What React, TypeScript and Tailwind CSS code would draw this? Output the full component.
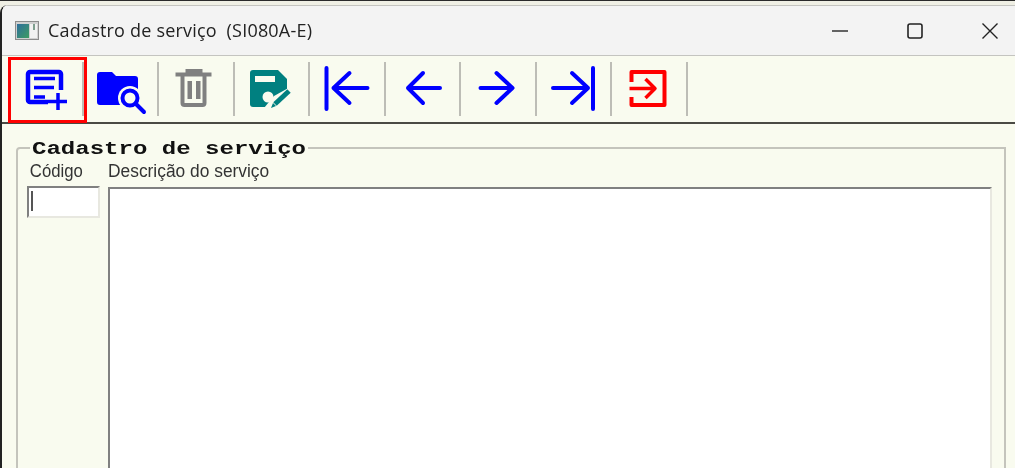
import React from 'react';

const BLUE = '#0000ff';
const TOOLBAR_BG = '#f9fbef';

const ToolButton: React.FC<{ view: string; children: React.ReactNode }> = ({ view, children }) => (
  <div className="w-[75.5px] h-full shrink-0 flex items-center">
    <svg viewBox={view} className="w-[73.5px] h-[66px]" fill="none">
      {children}
    </svg>
    <div className="w-[2px] h-[54px] -mt-px bg-[#bdbdb6]" />
  </div>
);

const App: React.FC = () => {
  return (
    <div className="w-[1015px] h-[468px] overflow-hidden bg-[#efefe4] relative blur-[0.4px] font-['Liberation_Sans',sans-serif]">
      <div className="h-px bg-[#2a2a2a]" />
      <div className="mt-1 h-[463px] border-l-2 border-[#222222] rounded-tl-lg overflow-hidden flex flex-col">
        {/* Title bar */}
        <div className="h-[51px] shrink-0 bg-[#f3f3f3] border-t border-b border-[#c4c4c0] flex items-center pl-[13px]">
          <svg viewBox="0 0 24 19" className="w-6 h-[19px] shrink-0">
            <defs>
              <linearGradient id="tb" x1="0" y1="0" x2="1" y2="1">
                <stop offset="0" stopColor="#2e6f9c" />
                <stop offset="1" stopColor="#3f9c62" />
              </linearGradient>
            </defs>
            <rect x="0.5" y="0.5" width="23" height="18" fill="#d0d0d0" stroke="#8c8c8c" />
            <rect x="2" y="3" width="12" height="14" fill="url(#tb)" />
            <rect x="15" y="3" width="7" height="14" fill="#f2f2f2" />
            <rect x="18" y="3" width="2" height="6" fill="#7f9f8f" />
          </svg>
          <span className="ml-[9px] font-['Open_Sans',sans-serif] text-[18px] text-[#222222] whitespace-pre tracking-[0.2px]">
            Cadastro de serviço  (SI080A-E)
          </span>
          <div className="ml-auto flex items-center h-full">
            <svg viewBox="0 0 16 16" className="w-4 h-4 mr-[59px]" fill="none" stroke="#333333" strokeWidth="1.4">
              <path d="M0 8h16" />
            </svg>
            <svg viewBox="0 0 16 16" className="w-4 h-4 mr-[59px]" fill="none" stroke="#222222" strokeWidth="1.6">
              <rect x="1" y="1" width="14" height="14" rx="2" />
            </svg>
            <svg viewBox="0 0 16 16" className="w-4 h-4 mr-[17px]" fill="none" stroke="#222222" strokeWidth="1.4">
              <path d="M0.5 0.5l15 15M15.5 0.5l-15 15" />
            </svg>
          </div>
        </div>

        {/* Toolbar */}
        <div className="h-[68px] shrink-0 bg-[#f9fbef] border-b-2 border-[#4a4a44] flex items-stretch pl-[6px] relative">
          <div className="absolute left-[6px] top-px w-[79px] h-[66px] border-[3px] border-[#ff0000] z-10" />
          <ToolButton view="8 56 73.500 66">
            <path d="M48 102H30a2 2 0 0 1-2-2V74a2 2 0 0 1 2-2h29a2 2 0 0 1 2 2v16" stroke={BLUE} strokeWidth="4.500" />
            <path d="M34 78.500h21M34 87.500h20M34 97h11M48 101.500h19M58 93v17" stroke={BLUE} strokeWidth="3.500" />
          </ToolButton>
          <ToolButton view="84 56 73.500 66">
            <path d="M97 75a3 3 0 0 1 3-3h12l4 4h19a3 3 0 0 1 3 3v26h-38a3 3 0 0 1-3-3z" fill={BLUE} />
            <circle cx="130" cy="98" r="12" fill={TOOLBAR_BG} />
            <circle cx="130" cy="98" r="7.500" fill={TOOLBAR_BG} stroke={BLUE} strokeWidth="4" />
            <path d="M136 104l8 8" stroke={BLUE} strokeWidth="4" strokeLinecap="round" />
          </ToolButton>
          <ToolButton view="159.500 56 73.500 66">
            <path d="M176 74.500h36M188 73v-2h13v2" stroke="#808080" strokeWidth="4" />
            <path d="M183 76v27a2 2 0 0 0 2 2h18a2 2 0 0 0 2-2V76" stroke="#808080" strokeWidth="4" />
            <rect x="188" y="81" width="4.500" height="18" fill="#808080" />
            <rect x="196.500" y="81" width="4.500" height="18" fill="#808080" />
          </ToolButton>
          <ToolButton view="235 56 73.500 66">
            <path d="M253 70h25l9 9v10l-19 18h-15a3 3 0 0 1-3-3V73a3 3 0 0 1 3-3z" fill="#008080" />
            <rect x="255" y="76" width="20" height="6" fill={TOOLBAR_BG} />
            <circle cx="268" cy="97" r="5.500" fill={TOOLBAR_BG} />
            <path d="M264 108l10-12 18-10 2 4-20 20z" fill={TOOLBAR_BG} />
            <path d="M275 104l14-13" stroke="#008080" strokeWidth="5" />
            <path d="M271 108l2-5 3 3z" fill="#008080" />
          </ToolButton>
          <ToolButton view="310.500 56 73.500 66">
            <path d="M327 68v41M368 88h-34M350 73l-16 15 16 15" stroke={BLUE} strokeWidth="4" strokeLinecap="round" strokeLinejoin="round" />
          </ToolButton>
          <ToolButton view="386 56 73.500 66">
            <path d="M440 88h-32M423 73l-15 15 15 15" stroke={BLUE} strokeWidth="4" strokeLinecap="round" strokeLinejoin="round" />
          </ToolButton>
          <ToolButton view="461.500 56 73.500 66">
            <path d="M481 88h32M497 73l16 15-16 15" stroke={BLUE} strokeWidth="4" strokeLinecap="round" strokeLinejoin="round" />
          </ToolButton>
          <ToolButton view="537 56 73.500 66">
            <path d="M553 88h35M572 73l16 15-16 15M593 68v41" stroke={BLUE} strokeWidth="4" strokeLinecap="round" strokeLinejoin="round" />
          </ToolButton>
          <ToolButton view="612.500 56 73.500 66">
            <path d="M632 82V72h33v33h-33V97" stroke="#ff0000" strokeWidth="4" strokeLinejoin="round" />
            <path d="M630 88.500h25M646 79l9.500 9.500L646 98" stroke="#ff0000" strokeWidth="3.500" strokeLinejoin="round" />
          </ToolButton>
        </div>

        {/* Form */}
        <div className="flex-1 bg-[#f9fbef] pl-[14px] pr-2 relative">
          <fieldset className="mt-[14px] w-[990px] h-[500px] border-2 border-[#c4c4bc] rounded-tl-sm pl-[9px] pr-3">
            <legend className="ml-[3px] px-[2px] w-[278px] h-[20px] -mt-px overflow-visible">
              <span className="block origin-left scale-x-[1.335] translate-y-[2px] font-['Liberation_Mono',monospace] font-bold text-[18px] leading-[19px] text-[#111111] whitespace-nowrap">
                Cadastro de serviço
              </span>
            </legend>
            <div className="flex gap-2 mt-[3px]">
              <div className="w-[73px] shrink-0 flex flex-col">
                <label className="pl-[3px] text-[18px] leading-[20px] text-[#333333] scale-x-[0.93] origin-left whitespace-nowrap">Código</label>
                <div className="mt-[5px] h-[32px] bg-white border-2 border-t-[#808080] border-l-[#808080] border-r-[#e8e8e0] border-b-[#e8e8e0] pl-[2px] pt-[3px]">
                  <div className="w-[2px] h-[20px] bg-[#555555]" />
                </div>
              </div>
              <div className="flex-1 flex flex-col">
                <label className="text-[18px] leading-[20px] text-[#333333] scale-x-[0.965] origin-left whitespace-nowrap">Descrição do serviço</label>
                <div className="mt-[6px] h-[300px] bg-white border-2 border-t-[#808080] border-l-[#808080] border-r-[#e8e8e0] border-b-[#e8e8e0]" />
              </div>
            </div>
          </fieldset>
        </div>
      </div>
    </div>
  );
};

export default App;
